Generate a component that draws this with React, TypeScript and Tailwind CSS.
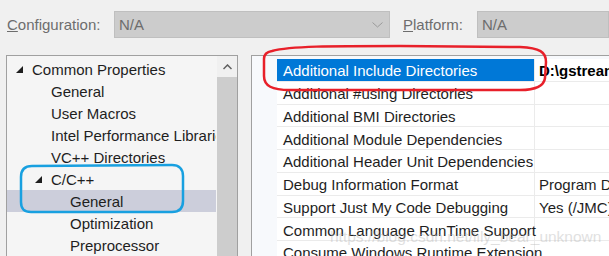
import React from 'react';

const treeItems: { label: string; indent: number; expander?: boolean; selected?: boolean }[] = [
  { label: 'Common Properties', indent: 0, expander: true },
  { label: 'General', indent: 1 },
  { label: 'User Macros', indent: 1 },
  { label: 'Intel Performance Libraries', indent: 1 },
  { label: 'VC++ Directories', indent: 1 },
  { label: 'C/C++', indent: 1, expander: true },
  { label: 'General', indent: 2, selected: true },
  { label: 'Optimization', indent: 2 },
  { label: 'Preprocessor', indent: 2 },
  { label: 'Code Generation', indent: 2 },
];

const props: { name: string; value?: string; bold?: boolean; selected?: boolean }[] = [
  { name: 'Additional Include Directories', value: 'D:\\gstreamer\\1.0\\msvc_x86_64\\include', bold: true, selected: true },
  { name: 'Additional #using Directories' },
  { name: 'Additional BMI Directories' },
  { name: 'Additional Module Dependencies' },
  { name: 'Additional Header Unit Dependencies' },
  { name: 'Debug Information Format', value: 'Program Database (/Zi)' },
  { name: 'Support Just My Code Debugging', value: 'Yes (/JMC)' },
  { name: 'Common Language RunTime Support' },
  { name: 'Consume Windows Runtime Extension' },
];

function Combo({ width }: { width: string }) {
  return (
    <div className={`${width} h-[27px] bg-[#cccccc] border border-[#bfbfbf] flex items-center justify-between pl-[4px] pr-[6px] text-[#6d6d6d]`}>
      <span>N/A</span>
      <svg width="11" height="6" viewBox="0 0 11 6" className="shrink-0">
        <path d="M0.5 0.5 L5.5 5 L10.5 0.5" fill="none" stroke="#9a9a9a" strokeWidth="1" />
      </svg>
    </div>
  );
}

export default function App() {
  return (
    <div className="relative w-[609px] h-[256px] overflow-hidden bg-[#f0f0f0] text-[15px] leading-none font-['Segoe_UI','Liberation_Sans',sans-serif] text-[#1e1e1e]">
      {/* Top toolbar */}
      <div className="flex items-center pt-[11px] h-[38px]">
        <span className="ml-[7px] w-[107px] text-[#6d6d6d]">
          <span className="underline">C</span>onfiguration:
        </span>
        <Combo width="w-[276px]" />
        <span className="ml-[13px] w-[74px] text-[#6d6d6d]">
          <span className="underline">P</span>latform:
        </span>
        <div className="flex-1 h-[27px] bg-[#cccccc] border border-[#bfbfbf] flex items-center pl-[4px] text-[#6d6d6d]">N/A</div>
      </div>

      <div className="flex mt-[17px]">
        {/* Tree */}
        <div className="ml-[6px] w-[233px] h-[220px] border border-[#a0a0a0] bg-[#f5f5f5] flex">
          <div className="w-[209px] pt-[2px] overflow-hidden">
            {treeItems.map((item, i) => (
              <div
                key={i}
                className={`h-[22px] flex items-center whitespace-nowrap ${item.selected ? 'bg-[#cccedb]' : ''}`}
                style={{ paddingLeft: 9 + item.indent * 19 }}
              >
                <span className="w-[16px] shrink-0 flex items-center">
                  {item.expander && (
                    <svg width="7" height="7" viewBox="0 0 7 7">
                      <path d="M7 0 L7 7 L0 7 Z" fill="#1e1e1e" />
                    </svg>
                  )}
                </span>
                <span>{item.label}</span>
              </div>
            ))}
          </div>
          <div className="w-[20px] ml-[1px] flex flex-col bg-[#f0f0f0]">
            <div className="h-[21px] flex items-center justify-center">
              <svg width="9" height="6" viewBox="0 0 9 6">
                <path d="M0.5 5 L4.5 1 L8.5 5" fill="none" stroke="#606060" strokeWidth="1.5" />
              </svg>
            </div>
            <div className="flex-1 bg-[#cdcdcd]" />
          </div>
        </div>

        {/* Property grid */}
        <div className="ml-[13px] flex-1 h-[220px] border-l border-t border-[#a0a0a0] bg-[#f7f9fc] pt-[3px] pl-[25px]">
          {props.map((p, i) => (
            <div key={i} className="h-[22.75px] flex bg-white border-b border-[#ebebeb] whitespace-nowrap">
              <div
                className={`w-[258px] shrink-0 flex items-center pl-[6px] pt-[2px] border-r border-[#ebebeb] ${
                  p.selected ? 'bg-[#0078d7] text-white' : ''
                }`}
              >
                {p.name}
              </div>
              <div className={`flex items-center pl-[4px] pt-[2px] ${p.bold ? 'font-bold text-black' : ''}`}>{p.value}</div>
            </div>
          ))}
        </div>
      </div>

      {/* Watermark */}
      <div className="absolute left-[330px] top-[229px] text-[15.5px] text-[#b4b4b4] opacity-40 pointer-events-none font-['Liberation_Sans',sans-serif]">
        https://blog.csdn.net/lily_bear_unknown
      </div>

      {/* Annotations */}
      <svg className="absolute left-0 top-0 pointer-events-none" width="609" height="256" viewBox="0 0 609 256">
        <path
          d="M272 51 C290 46 330 46 400 46 L520 47 C540 48 546 52 546 62 L545 78 C544 86 536 90 520 90 L290 90 C272 90 264 86 264 76 L264 59 C264 55 266 52 272 51 Z"
          fill="none"
          stroke="#e8202a"
          strokeWidth="2.5"
        />
        <path
          d="M32 166 L172 165 C179 165 183 169 183 176 L183 201 C183 209 179 212 172 212 L31 212 C24 212 21 209 21 202 L21 177 C21 170 24 166 32 166 Z"
          fill="none"
          stroke="#18a0e0"
          strokeWidth="2.5"
        />
      </svg>
    </div>
  );
}
